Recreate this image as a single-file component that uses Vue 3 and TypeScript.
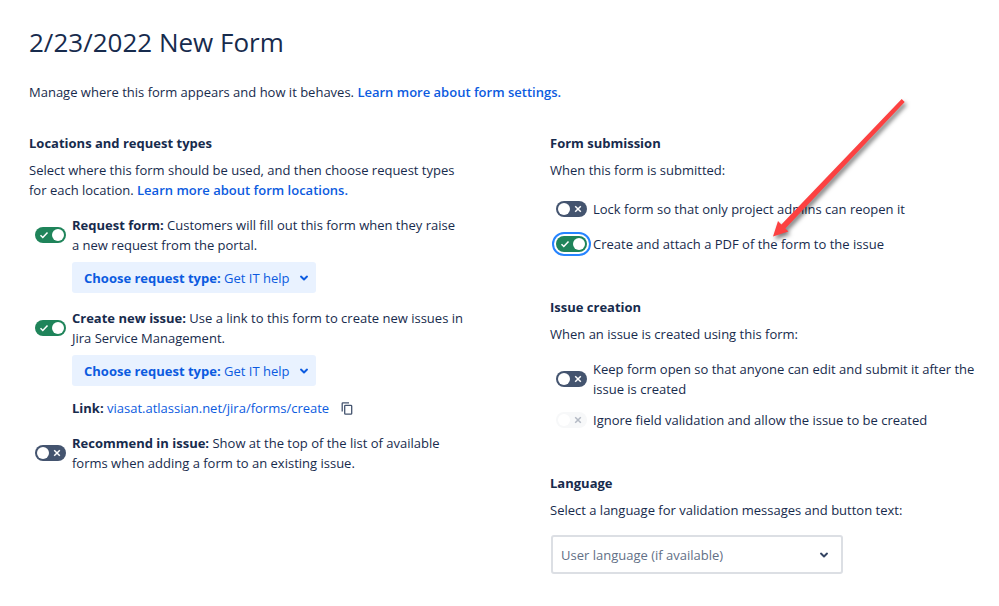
<script setup lang="ts">
import { reactive, ref } from 'vue'

interface Location {
  id: string
  name: string
  text: string
  enabled: boolean
  requestType?: string
  link?: string
}

interface Rule {
  id: string
  text: string
  enabled: boolean
  disabled?: boolean
  focused?: boolean
}

interface RuleGroup {
  id: string
  title: string
  intro: string
  rules: Rule[]
}

const locations = reactive<Location[]>([
  {
    id: 'request-form',
    name: 'Request form:',
    text: 'Customers will fill out this form when they raise a new request from the portal.',
    enabled: true,
    requestType: 'Get IT help',
  },
  {
    id: 'create-issue',
    name: 'Create new issue:',
    text: 'Use a link to this form to create new issues in Jira Service Management.',
    enabled: true,
    requestType: 'Get IT help',
    link: 'viasat.atlassian.net/jira/forms/create',
  },
  {
    id: 'recommend',
    name: 'Recommend in issue:',
    text: 'Show at the top of the list of available forms when adding a form to an existing issue.',
    enabled: false,
  },
])

const groups = reactive<RuleGroup[]>([
  {
    id: 'submission',
    title: 'Form submission',
    intro: 'When this form is submitted:',
    rules: [
      { id: 'lock', text: 'Lock form so that only project admins can reopen it', enabled: false },
      { id: 'pdf', text: 'Create and attach a PDF of the form to the issue', enabled: true, focused: true },
    ],
  },
  {
    id: 'creation',
    title: 'Issue creation',
    intro: 'When an issue is created using this form:',
    rules: [
      { id: 'keep-open', text: 'Keep form open so that anyone can edit and submit it after the issue is created', enabled: false },
      { id: 'ignore', text: 'Ignore field validation and allow the issue to be created', enabled: false, disabled: true },
    ],
  },
])

const language = ref('user')
</script>

<template>
  <main class="page">
    <h1>2/23/2022 New Form</h1>
    <p class="lead">
      Manage where this form appears and how it behaves.
      <a href="#settings">Learn more about form settings.</a>
    </p>

    <div class="columns">
      <section class="column">
        <h2>Locations and request types</h2>
        <p>
          Select where this form should be used, and then choose request types for each location.
          <a href="#locations">Learn more about form locations.</a>
        </p>

        <div class="locations">
          <div v-for="item in locations" :key="item.id" class="location">
            <div class="row">
              <span class="switch">
                <input :id="item.id" v-model="item.enabled" type="checkbox" role="switch" />
                <svg v-if="item.enabled" class="mark on" viewBox="0 0 10 10"><path d="M1.5 5.3 3.8 7.5 8.5 2.5" /></svg>
                <svg v-else class="mark off" viewBox="0 0 10 10"><path d="M2.2 2.2 7.8 7.8M7.8 2.2 2.2 7.8" /></svg>
              </span>
              <label :for="item.id"><b>{{ item.name }}</b> {{ item.text }}</label>
            </div>
            <button v-if="item.requestType" type="button" class="picker">
              <span><b>Choose request type:</b> {{ item.requestType }}</span>
              <svg class="chevron" viewBox="0 0 10 10"><path d="M2 3.6 5 6.4 8 3.6" /></svg>
            </button>
            <div v-if="item.link" class="link">
              <span><b>Link:</b> <a href="#create">{{ item.link }}</a></span>
              <button type="button" class="copy" aria-label="Copy link">
                <svg viewBox="0 0 12 13">
                  <path d="M1.2 9.6V1.6Q1.2.9 1.9.9H8" />
                  <rect x="3.7" y="3.3" width="7" height="8.9" rx=".8" />
                </svg>
              </button>
            </div>
          </div>
        </div>
      </section>

      <div class="column">
        <section v-for="group in groups" :key="group.id" class="group">
          <h2>{{ group.title }}</h2>
          <p>{{ group.intro }}</p>
          <div class="rules">
            <div v-for="rule in group.rules" :key="rule.id" class="row">
              <span class="switch" :class="{ focused: rule.focused }">
                <input :id="rule.id" v-model="rule.enabled" type="checkbox" role="switch" :disabled="rule.disabled" />
                <svg v-if="rule.enabled" class="mark on" viewBox="0 0 10 10"><path d="M1.5 5.3 3.8 7.5 8.5 2.5" /></svg>
                <svg v-else class="mark off" :class="{ dim: rule.disabled }" viewBox="0 0 10 10"><path d="M2.2 2.2 7.8 7.8M7.8 2.2 2.2 7.8" /></svg>
              </span>
              <label :for="rule.id">{{ rule.text }}</label>
            </div>
          </div>
        </section>

        <section class="group">
          <h2>Language</h2>
          <p><label for="language">Select a language for validation messages and button text:</label></p>
          <div class="select">
            <select id="language" v-model="language">
              <option value="user">User language (if available)</option>
            </select>
            <svg class="chevron" viewBox="0 0 10 10"><path d="M2 3.6 5 6.4 8 3.6" /></svg>
          </div>
        </section>

        <!-- Callout arrow pointing at the PDF setting -->
        <svg class="arrow" viewBox="0 0 150 160" aria-hidden="true">
          <path d="M138.7 9 141.7 12 22.4 138.6 25.4 141.6 10 146.6 15 131 18.4 134.4Z" />
        </svg>
      </div>
    </div>
  </main>
</template>

<style>
body {
  background: #fff;
}
</style>

<style scoped>
.page {
  padding: 24px 19px 32px 29px;
  color: #172b4d;
  font: 13px/20px "Open Sans", "Noto Sans", sans-serif;
}

h1,
h2,
p {
  margin: 0;
}

h1 {
  font-size: 26px;
  font-weight: 400;
  line-height: 36px;
}

h2 {
  font-size: 13px;
  font-weight: 700;
  line-height: 20px;
}

a {
  color: #0c5be0;
  font-weight: 600;
  text-decoration: none;
}

.lead {
  margin-top: 22px;
}

.columns {
  display: grid;
  grid-template-columns: 436fr 430fr;
  gap: 85px;
  margin-top: 31px;
}

.column {
  position: relative;
}

h2 + p {
  margin-top: 7px;
}

.locations {
  display: grid;
  gap: 15px;
  margin-top: 15px;
}

.row {
  display: flex;
  align-items: center;
  gap: 6px;
  min-height: 28px;
  padding-left: 6px;
}

.switch {
  display: grid;
  flex: none;
  align-items: center;
  border-radius: 8px;
}

.switch.focused {
  outline: 2px solid #2684ff;
  outline-offset: 2px;
}

.switch > * {
  grid-area: 1 / 1;
}

.switch input {
  display: flex;
  align-items: center;
  box-sizing: border-box;
  width: 31px;
  height: 16px;
  margin: 0;
  padding: 0 2px;
  border-radius: 8px;
  background: #44546f;
  appearance: none;
}

.switch input::before {
  width: 12px;
  height: 12px;
  border-radius: 50%;
  background: #fff;
  content: "";
}

.switch input:checked {
  justify-content: flex-end;
  background: #1f845a;
}

.switch input:disabled {
  background: #f7f8f9;
}

.mark {
  width: 10px;
  height: 10px;
  fill: none;
  stroke: #fff;
  stroke-width: 1.5;
  pointer-events: none;
}

.mark.on {
  margin-left: 4px;
}

.mark.off {
  justify-self: end;
  margin-right: 4px;
}

.mark.dim {
  stroke: #b3b9c4;
}

.picker {
  display: flex;
  align-items: center;
  gap: 10px;
  height: 31px;
  margin: 7px 0 0 43px;
  padding: 0 7px 0 12px;
  border: 0;
  border-radius: 3px;
  background: #e9f2ff;
  color: #0c5be0;
  font: inherit;
  font-weight: 500;
}

.picker b {
  font-weight: 700;
}

.chevron {
  width: 10px;
  height: 10px;
  fill: none;
  stroke: currentColor;
  stroke-width: 2;
  stroke-linecap: round;
  stroke-linejoin: round;
}

.link {
  display: flex;
  align-items: center;
  gap: 12px;
  margin: 12px 0 0 43px;
}

.link a {
  font-weight: 500;
}

.copy {
  display: flex;
  padding: 0;
  border: 0;
  background: none;
}

.copy svg {
  width: 12px;
  height: 13px;
  fill: none;
  stroke: #44546f;
  stroke-width: 1.3;
}

.group + .group {
  margin-top: 39px;
}

.rules {
  display: grid;
  gap: 7px;
  margin-top: 15px;
}

.select {
  display: grid;
  align-items: center;
  width: 68%;
  margin: 15px 0 0 1px;
}

.select > * {
  grid-area: 1 / 1;
}

.select select {
  width: 100%;
  height: 39px;
  padding: 0 32px 0 8px;
  border: 2px solid #dcdfe4;
  border-radius: 3px;
  background: #fff;
  color: #626f86;
  font: inherit;
  appearance: none;
}

.select .chevron {
  justify-self: end;
  margin-right: 14px;
  color: #344563;
  pointer-events: none;
}

.arrow {
  position: absolute;
  top: -43px;
  left: 213px;
  width: 150px;
  height: 160px;
  fill: #fc4141;
  filter: drop-shadow(2px 3px 2px rgb(0 0 0 / 50%));
  pointer-events: none;
}
</style>
